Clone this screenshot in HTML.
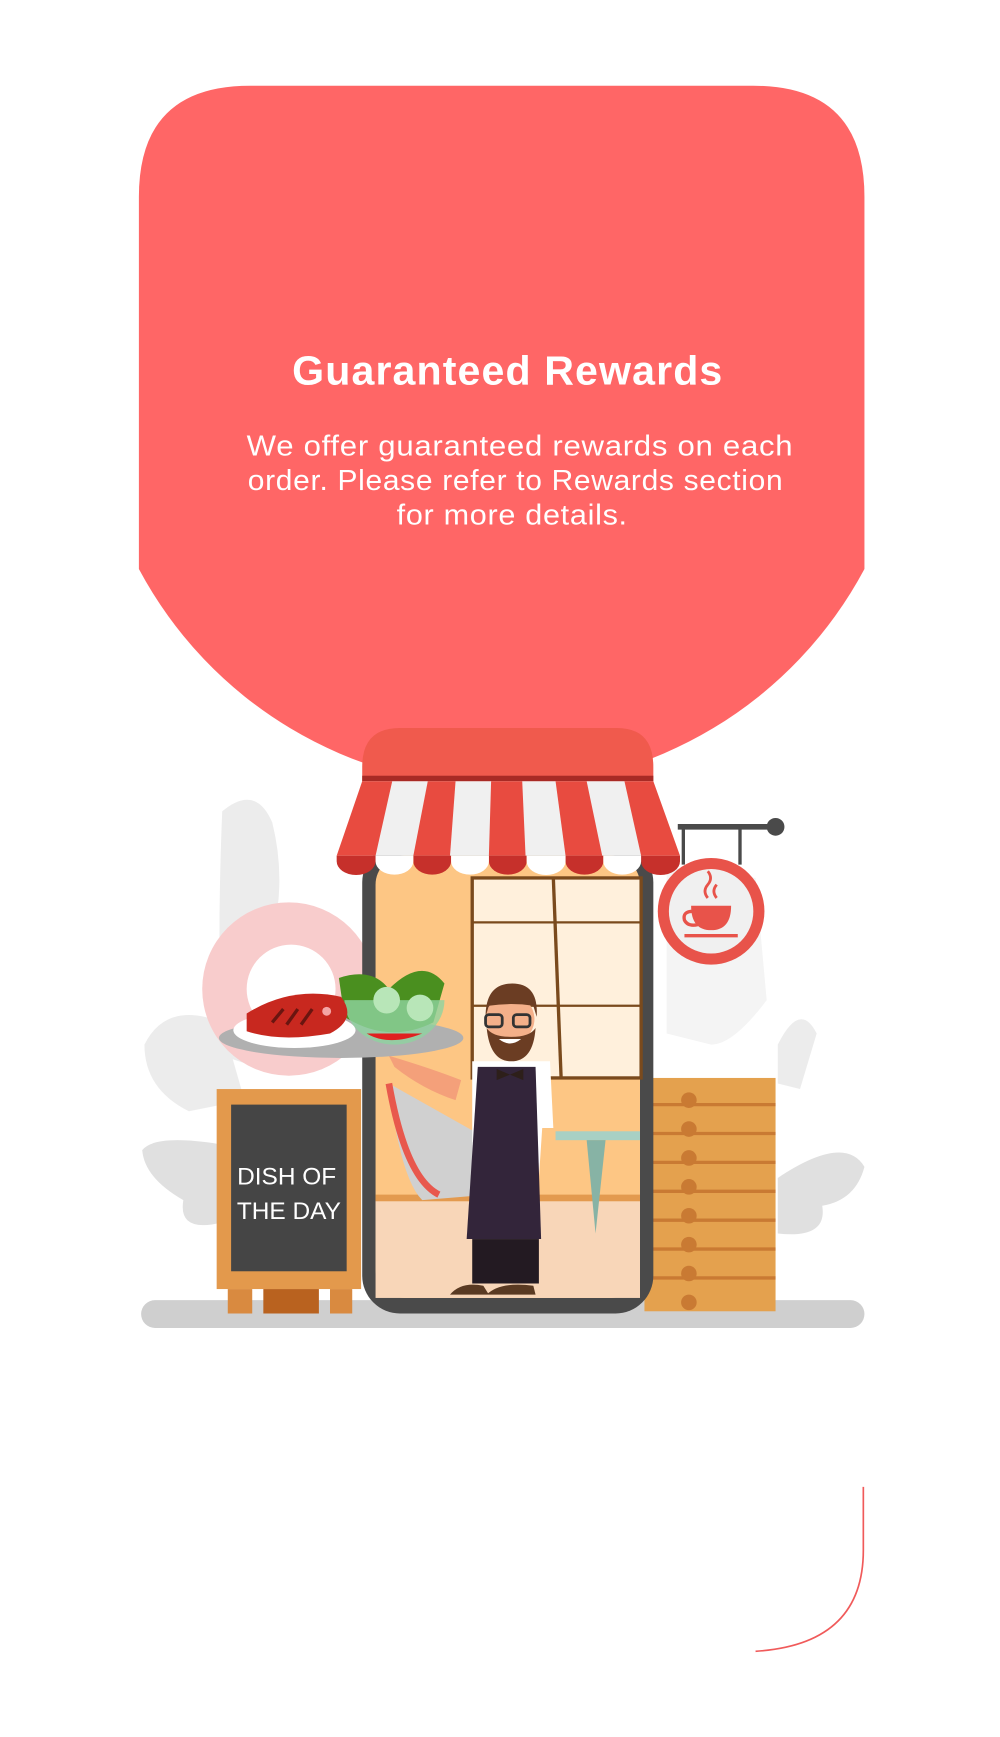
<!DOCTYPE html>
<html><head><meta charset="utf-8"><style>
html,body{margin:0;padding:0;background:#fff;width:1000px;height:1737px;overflow:hidden}
svg{display:block}
</style></head><body>
<svg width="1000" height="1737" viewBox="0 0 900 1563" xmlns="http://www.w3.org/2000/svg">
<path d="M125,177 Q125,77 225,77 L678,77 Q778,77 778,177 L778,512 A370,370 0 0 1 125,512 Z" fill="#ff6666"/>
<text x="457" y="346" text-anchor="middle" font-family="Liberation Sans, sans-serif" font-weight="bold" font-size="37" letter-spacing="1" fill="#fff">Guaranteed Rewards</text>
<g font-family="Liberation Sans, sans-serif" font-size="26" letter-spacing="0.6" fill="#fff" text-anchor="middle">
<text x="468" y="410" textLength="492" lengthAdjust="spacingAndGlyphs">We offer guaranteed rewards on each</text>
<text x="464" y="441" textLength="482" lengthAdjust="spacingAndGlyphs">order. Please refer to Rewards section</text>
<text x="461" y="472" textLength="208" lengthAdjust="spacingAndGlyphs">for more details.</text>
</g>
<g fill="#ececec">
<path d="M200,730 Q230,705 245,740 Q260,800 240,860 L230,960 L200,950 Q195,850 200,730Z"/>
<path d="M130,940 Q150,900 200,920 L220,990 L170,1000 Q130,980 130,940Z"/>
<path d="M128,1035 Q140,1020 200,1030 L200,1100 Q160,1110 165,1080 Q130,1060 128,1035Z" fill="#e0e0e0"/>
<path d="M700,940 Q720,900 735,930 L720,980 L700,975Z"/>
<path d="M700,1060 Q760,1020 778,1050 Q770,1080 740,1085 Q745,1115 700,1110Z" fill="#e0e0e0"/>
<path d="M600,780 L680,790 L690,900 Q660,940 640,940 L600,930Z" fill="#f4f4f4"/>
</g>
<circle cx="260" cy="890" r="78" fill="#f8cccc"/>
<circle cx="262" cy="890" r="40" fill="#fff"/>
<rect x="127" y="1170" width="651" height="25" rx="12.5" fill="#cfcfcf"/>
<g fill="#e4a14e"><rect x="580" y="970" width="118" height="210"/></g>
<g stroke="#c97a33" stroke-width="3">
<line x1="580" y1="994" x2="698" y2="994"/><line x1="580" y1="1020" x2="698" y2="1020"/><line x1="580" y1="1046" x2="698" y2="1046"/><line x1="580" y1="1072" x2="698" y2="1072"/><line x1="580" y1="1098" x2="698" y2="1098"/><line x1="580" y1="1124" x2="698" y2="1124"/><line x1="580" y1="1150" x2="698" y2="1150"/>
</g>
<g fill="#c97a33"><circle cx="620" cy="990" r="7"/><circle cx="620" cy="1016" r="7"/><circle cx="620" cy="1042" r="7"/><circle cx="620" cy="1068" r="7"/><circle cx="620" cy="1094" r="7"/><circle cx="620" cy="1120" r="7"/><circle cx="620" cy="1146" r="7"/><circle cx="620" cy="1172" r="7"/></g>
<rect x="326" y="760" width="262" height="422" rx="34" fill="#4a4a4a"/>
<rect x="338" y="770" width="238" height="398" rx="26" fill="#fdc684"/>
<rect x="338" y="1080" width="238" height="88" fill="#f8d6b8"/>
<rect x="338" y="1075" width="238" height="6" fill="#e39a4f"/>
<rect x="425" y="790" width="152" height="180" fill="#fff0dc" stroke="#7a4a1d" stroke-width="3"/>
<line x1="498" y1="790" x2="505" y2="970" stroke="#7a4a1d" stroke-width="3"/>
<line x1="425" y1="830" x2="577" y2="830" stroke="#7a4a1d" stroke-width="2"/>
<line x1="425" y1="905" x2="577" y2="905" stroke="#7a4a1d" stroke-width="2"/>
<rect x="500" y="1018" width="76" height="8" fill="#a8d0c4"/>
<path d="M528,1026 L536,1110 L545,1026Z" fill="#87b3a5"/>
<path d="M350,975 Q360,1060 380,1080 L440,1075 L430,1020Z" fill="#d0d0d0"/>
<path d="M350,975 Q365,1060 395,1075" stroke="#e8584d" stroke-width="6" fill="none"/>
<path d="M326,705 L326,690 Q326,655 360,655 L555,655 Q588,655 588,690 L588,705Z" fill="#f05a4d"/>
<rect x="326" y="698" width="262" height="5" fill="#a82a25"/>
<path d="M326,703 L588,703 L612,770 L303,770Z" fill="#f0f0f0"/>
<g fill="#e84b40">
<path d="M326,703 L353,703 L338,770 L303,770Z"/><path d="M385,703 L410,703 L405,770 L372,770Z"/><path d="M442,703 L470,703 L473,770 L440,770Z"/><path d="M500,703 L528,703 L542,770 L509,770Z"/><path d="M562,703 L588,703 L612,770 L577,770Z"/>
</g>
<g fill="#c6302b"><path d="M303,770 h35 v5 a17,12 0 0 1 -35,0Z"/><path d="M372,770 h34 v5 a17,12 0 0 1 -34,0Z"/><path d="M440,770 h34 v5 a17,12 0 0 1 -34,0Z"/><path d="M509,770 h34 v5 a17,12 0 0 1 -34,0Z"/><path d="M577,770 h35 v5 a17,12 0 0 1 -35,0Z"/></g>
<g fill="#fff"><path d="M338,770 h34 v5 a17,12 0 0 1 -34,0Z"/><path d="M406,770 h34 v5 a17,12 0 0 1 -34,0Z"/><path d="M474,770 h35 v5 a17,12 0 0 1 -35,0Z"/><path d="M543,770 h34 v5 a17,12 0 0 1 -34,0Z"/></g>
<line x1="610" y1="744" x2="697" y2="744" stroke="#4a4a4a" stroke-width="5"/>
<circle cx="698" cy="744" r="8" fill="#4a4a4a"/>
<line x1="615" y1="744" x2="615" y2="778" stroke="#4a4a4a" stroke-width="3"/>
<line x1="666" y1="744" x2="666" y2="778" stroke="#4a4a4a" stroke-width="3"/>
<circle cx="640" cy="820" r="48" fill="#e8534a"/>
<circle cx="640" cy="820" r="38" fill="#f0f0f0"/>
<path d="M622,815 h36 q0,22 -18,22 q-18,0 -18,-22Z" fill="#e8534a"/>
<path d="M624,820 q-10,0 -8,8 q3,6 12,4" stroke="#e8534a" stroke-width="3" fill="none"/>
<line x1="616" y1="842" x2="664" y2="842" stroke="#e8534a" stroke-width="3"/>
<path d="M637,808 q-5,-6 0,-12 q5,-6 0,-12 M645,808 q-5,-6 0,-12" stroke="#e8534a" stroke-width="2.5" fill="none"/>
<rect x="195" y="980" width="130" height="180" fill="#e3994c"/>
<rect x="208" y="994" width="104" height="150" fill="#454545"/>
<rect x="205" y="1160" width="22" height="22" fill="#d98a40"/><rect x="237" y="1160" width="50" height="22" fill="#b9621f"/><rect x="297" y="1160" width="20" height="22" fill="#d98a40"/>
<text x="258" y="1066" text-anchor="middle" font-family="Liberation Sans Narrow, Liberation Sans, sans-serif" font-size="22" fill="#fff">DISH OF</text>
<text x="260" y="1097" text-anchor="middle" font-family="Liberation Sans Narrow, Liberation Sans, sans-serif" font-size="22" fill="#fff">THE DAY</text>
<path d="M425,955 L495,955 L498,1015 L488,1015 L485,1060 L425,1060Z" fill="#fff"/>
<path d="M430,960 L482,960 L487,1115 L420,1115Z" fill="#33253a"/>
<rect x="425" y="1115" width="60" height="40" fill="#231a22"/>
<path d="M405,1165 q10,-12 30,-8 L440,1165Z M438,1165 q12,-12 42,-8 L482,1165Z" fill="#5a3a22"/>
<circle cx="459" cy="917" r="22" fill="#f4b08a"/>
<path d="M437,915 q0,-30 24,-30 q24,0 22,30 l-3,-10 q-20,-3 -40,0Z" fill="#6b3d23"/>
<path d="M438,925 q3,30 22,30 q20,0 22,-30 q-5,8 -22,8 q-17,0 -22,-8Z" fill="#6b3d23"/>
<path d="M449,935 q10,8 20,0Z" fill="#fff"/>
<g stroke="#333" stroke-width="2.5" fill="none"><rect x="437" y="913" width="15" height="11" rx="3"/><rect x="462" y="913" width="15" height="11" rx="3"/></g>
<path d="M447,962 l12,5 l12,-5 v10 l-12,-5 l-12,5Z" fill="#2d1f1a"/>
<path d="M350,950 q40,12 65,22 l-5,18 q-30,-10 -55,-30Z" fill="#f4a07a"/>
<ellipse cx="307" cy="934" rx="110" ry="18" fill="#b0b0b0"/>
<path d="M305,880 q30,-10 45,10 q30,-30 50,-5 l-10,35 q-40,20 -80,-5Z" fill="#4a8f1f"/>
<path d="M310,900 a45,40 0 0 0 90,0Z" fill="#8fd3a0" opacity="0.8"/>
<circle cx="348" cy="900" r="12" fill="#b8e6b8"/><circle cx="378" cy="907" r="12" fill="#b8e6b8"/>
<path d="M330,930 q20,12 50,0Z" fill="#e02020"/>
<ellipse cx="265" cy="927" rx="55" ry="16" fill="#fff"/>
<path d="M222,912 q40,-25 85,-15 q15,20 -10,33 q-45,8 -75,-2Z" fill="#c8281f"/>
<g stroke="#6a1510" stroke-width="3"><line x1="245" y1="920" x2="255" y2="908"/><line x1="258" y1="922" x2="268" y2="908"/><line x1="271" y1="922" x2="281" y2="908"/></g>
<circle cx="294" cy="910" r="4" fill="#f4a5a5"/>
<path d="M777,1338 L777,1395 Q777,1480 680,1486" stroke="#f05a5a" stroke-width="1.5" fill="none"/>
</svg>
</body></html>
